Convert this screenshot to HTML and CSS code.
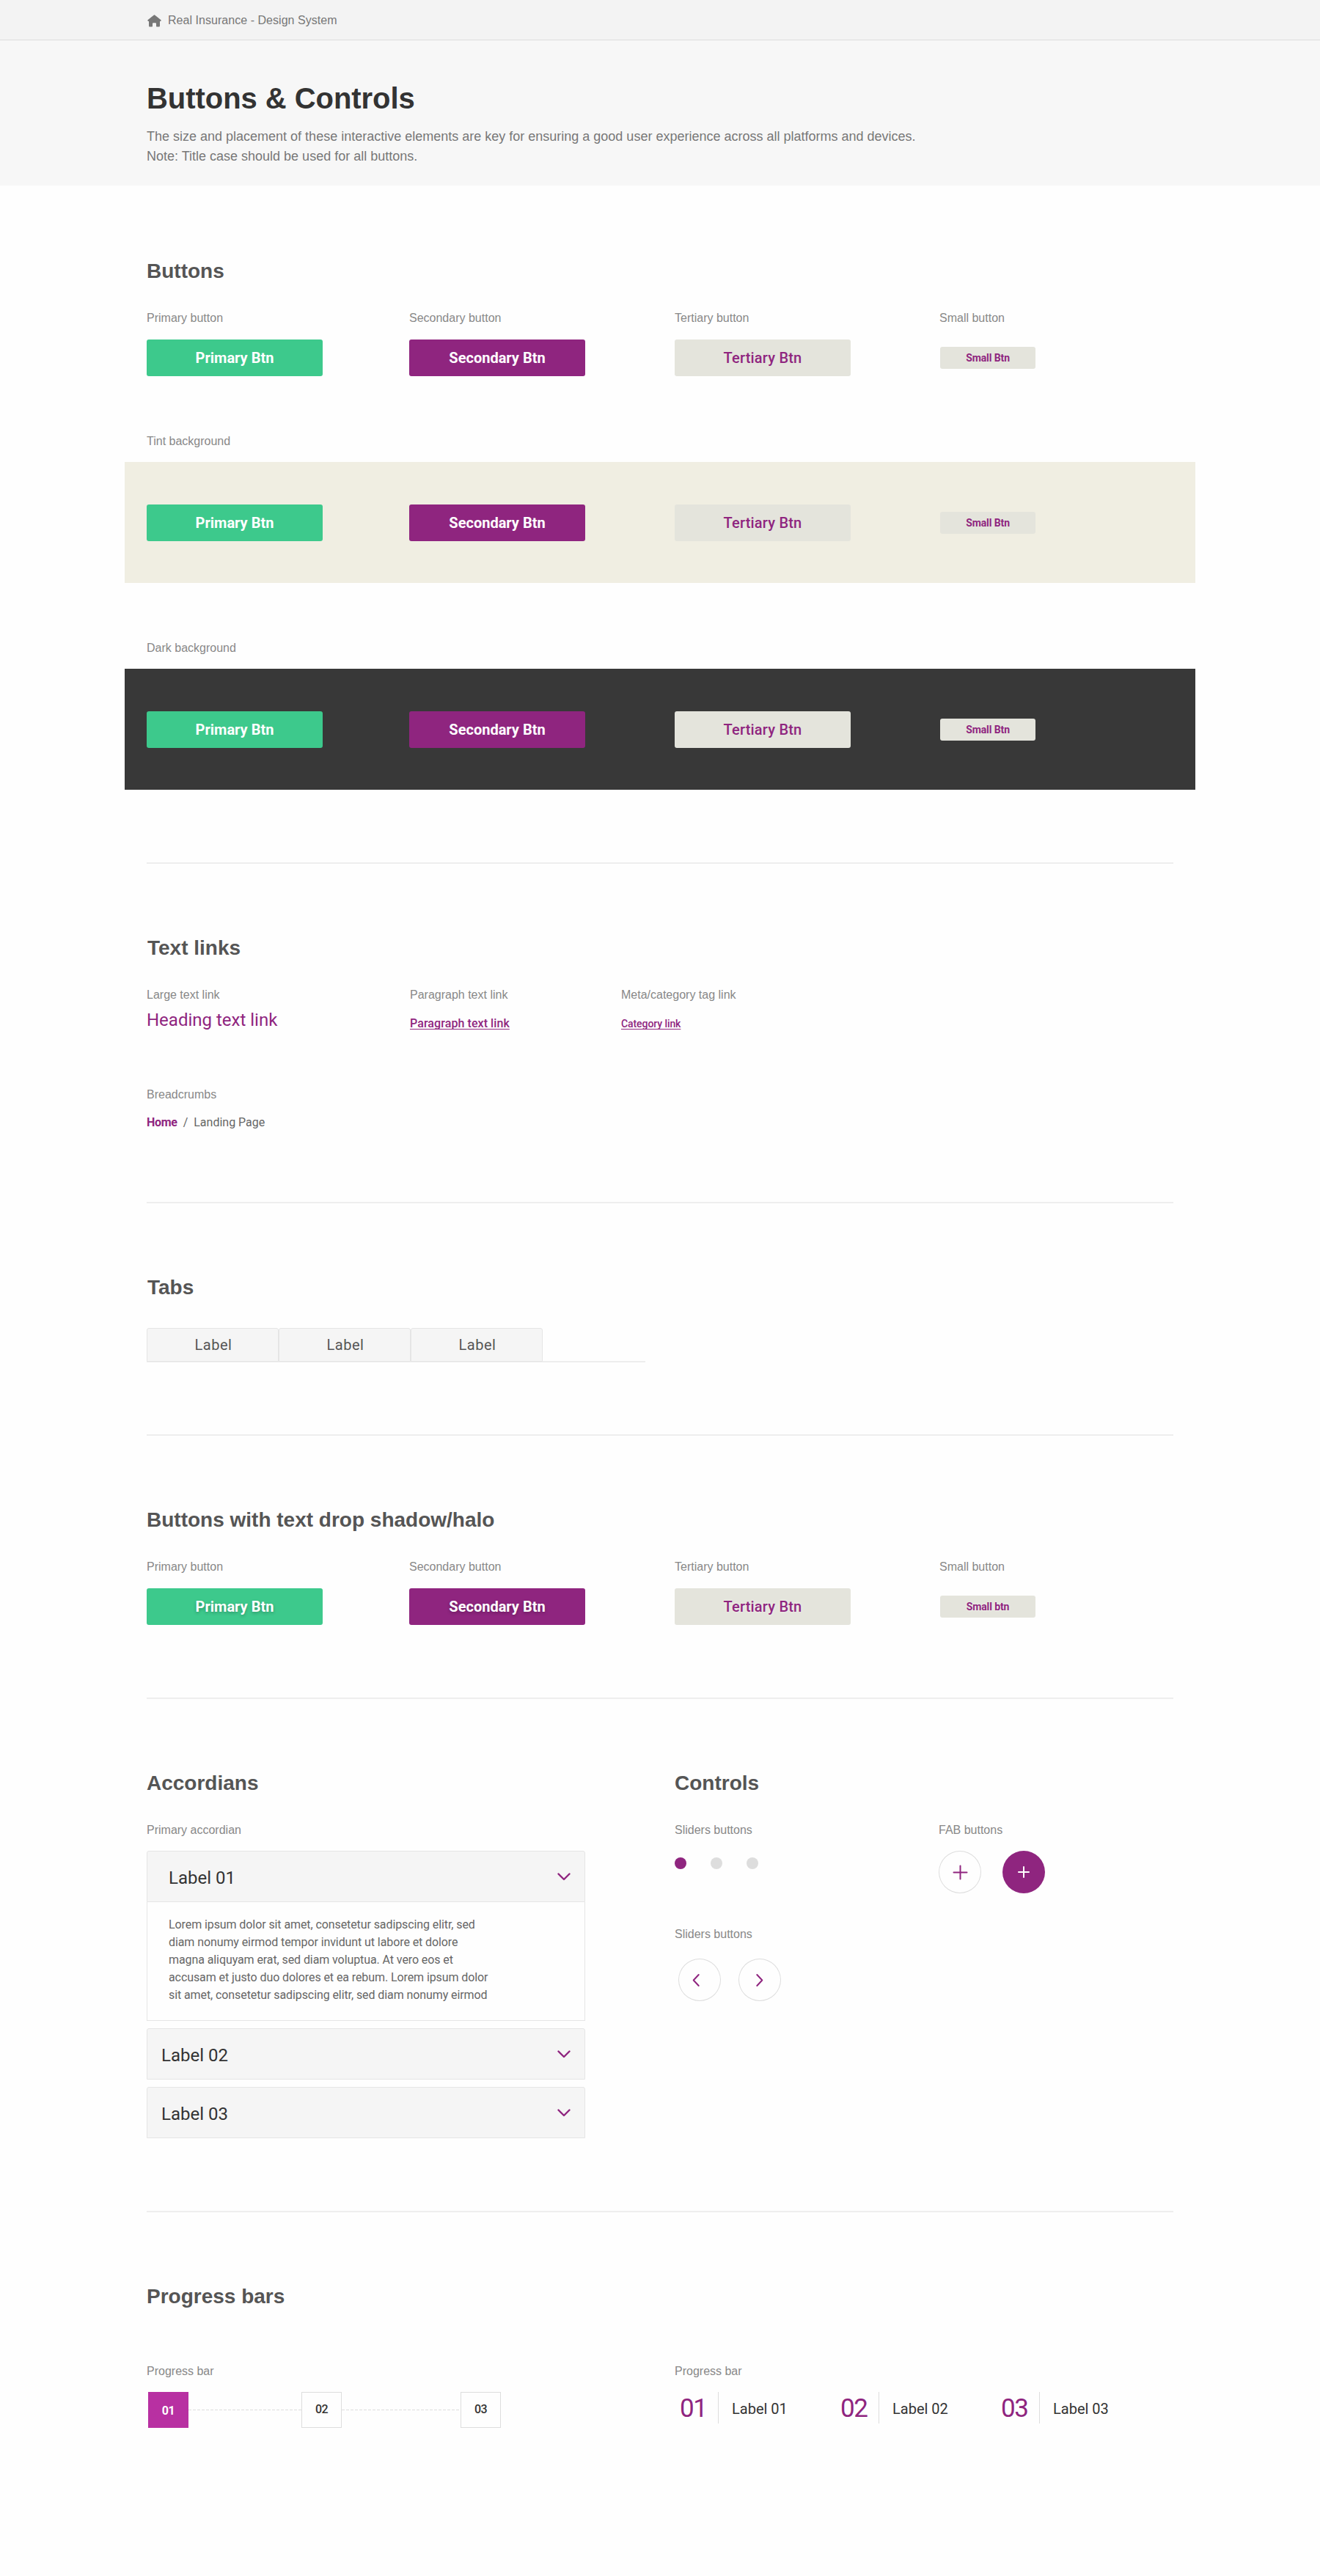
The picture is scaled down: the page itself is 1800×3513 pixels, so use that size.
FILE: index.html
```html
<!DOCTYPE html>
<html lang="en">
<head>
  <meta charset="UTF-8">
  <title>Real Insurance - Design System | Buttons &amp; Controls</title>
  <link rel="stylesheet" href="styles.css">
</head>
<body>

  <nav class="topbar">
    <div class="container topbar-inner">
      <svg class="home-icon" width="19" height="17" viewBox="0 0 19 17">
        <path d="M8.6.7a1.4 1.4 0 0 1 1.8 0l7.8 6.3c.9.8.5 1.9-.5 1.9H17v6.3c0 .8-.6 1.3-1.3 1.3h-2.9c-.5 0-.8-.3-.8-.8v-3.3c0-.8-.5-1.2-1.2-1.2H8.2c-.7 0-1.2.4-1.2 1.2v3.3c0 .5-.3.8-.8.8H3.3c-.7 0-1.3-.5-1.3-1.3V8.900h-.7c-1 0-1.400-1.100-.5-1.900z"/>
      </svg>
      <span>Real Insurance - Design System</span>
    </div>
  </nav>

  <header class="hero">
    <div class="container">
      <h1>Buttons &amp; Controls</h1>
      <p>The size and placement of these interactive elements are key for ensuring a good user experience across all platforms and devices.<br>Note: Title case should be used for all buttons.</p>
    </div>
  </header>

  <main class="container">

    <!-- Buttons -->
    <section class="block block-first">
      <h2>Buttons</h2>
      <div class="cols label-row">
        <p class="label">Primary button</p>
        <p class="label">Secondary button</p>
        <p class="label">Tertiary button</p>
        <p class="label">Small button</p>
      </div>
      <div class="cols btn-row">
        <button class="btn btn-primary">Primary Btn</button>
        <button class="btn btn-secondary">Secondary Btn</button>
        <button class="btn btn-tertiary">Tertiary Btn</button>
        <button class="btn btn-small">Small Btn</button>
      </div>

      <p class="label label-next">Tint background</p>
      <div class="band band-tint">
        <div class="cols btn-row">
          <button class="btn btn-primary">Primary Btn</button>
          <button class="btn btn-secondary">Secondary Btn</button>
          <button class="btn btn-tertiary">Tertiary Btn</button>
          <button class="btn btn-small">Small Btn</button>
        </div>
      </div>

      <p class="label label-next">Dark background</p>
      <div class="band band-dark">
        <div class="cols btn-row">
          <button class="btn btn-primary">Primary Btn</button>
          <button class="btn btn-secondary">Secondary Btn</button>
          <button class="btn btn-tertiary">Tertiary Btn</button>
          <button class="btn btn-small">Small Btn</button>
        </div>
      </div>
    </section>

    <!-- Text links -->
    <section class="block">
      <h2 class="h2-t">Text links</h2>
      <div class="link-cols">
        <div>
          <p class="label">Large text link</p>
          <a class="link-heading" href="#">Heading text link</a>
        </div>
        <div>
          <p class="label">Paragraph text link</p>
          <a class="link-paragraph" href="#">Paragraph text link</a>
        </div>
        <div>
          <p class="label">Meta/category tag link</p>
          <a class="link-category" href="#">Category link</a>
        </div>
      </div>
      <p class="label label-breadcrumbs">Breadcrumbs</p>
      <div class="breadcrumbs">
        <a href="#">Home</a>
        <span>/</span>
        <span>Landing Page</span>
      </div>
    </section>

    <!-- Tabs -->
    <section class="block block-tabs">
      <h2 class="h2-t">Tabs</h2>
      <div class="tabs">
        <div class="tab">Label</div>
        <div class="tab">Label</div>
        <div class="tab">Label</div>
      </div>
    </section>

    <!-- Buttons with text shadow -->
    <section class="block">
      <h2>Buttons with text drop shadow/halo</h2>
      <div class="cols label-row">
        <p class="label">Primary button</p>
        <p class="label">Secondary button</p>
        <p class="label">Tertiary button</p>
        <p class="label">Small button</p>
      </div>
      <div class="cols btn-row">
        <button class="btn btn-primary btn-shadow">Primary Btn</button>
        <button class="btn btn-secondary btn-shadow">Secondary Btn</button>
        <button class="btn btn-tertiary btn-halo">Tertiary Btn</button>
        <button class="btn btn-small btn-halo">Small btn</button>
      </div>
    </section>

    <!-- Accordians + Controls -->
    <section class="block halves">
      <div class="accordian-col">
        <h2>Accordians</h2>
        <p class="label">Primary accordian</p>
        <div class="accordian">
          <div class="accordian-item open">
            <div class="accordian-head">
              <span>Label 01</span>
              <svg class="chevron" width="18" height="11" viewBox="0 0 18 11"><path d="M1.5 1.5 9 9l7.5-7.5"/></svg>
            </div>
            <div class="accordian-body">
              Lorem ipsum dolor sit amet, consetetur sadipscing elitr, sed<br>
              diam nonumy eirmod tempor invidunt ut labore et dolore<br>
              magna aliquyam erat, sed diam voluptua. At vero eos et<br>
              accusam et justo duo dolores et ea rebum. Lorem ipsum dolor<br>
              sit amet, consetetur sadipscing elitr, sed diam nonumy eirmod
            </div>
          </div>
          <div class="accordian-item">
            <div class="accordian-head">
              <span>Label 02</span>
              <svg class="chevron" width="18" height="11" viewBox="0 0 18 11"><path d="M1.5 1.5 9 9l7.5-7.5"/></svg>
            </div>
          </div>
          <div class="accordian-item">
            <div class="accordian-head">
              <span>Label 03</span>
              <svg class="chevron" width="18" height="11" viewBox="0 0 18 11"><path d="M1.5 1.5 9 9l7.5-7.5"/></svg>
            </div>
          </div>
        </div>
      </div>

      <div>
        <h2>Controls</h2>
        <div class="control-cols">
          <div>
            <p class="label">Sliders buttons</p>
            <div class="dots">
              <span class="dot active"></span>
              <span class="dot"></span>
              <span class="dot"></span>
            </div>
            <p class="label label-next">Sliders buttons</p>
            <div class="arrows">
              <div class="circle"><svg width="58" height="58" viewBox="0 0 58 58"><path d="M27.7 22l-7 7.5 7 7.5"/></svg></div>
              <div class="circle"><svg width="58" height="58" viewBox="0 0 58 58"><path d="M25.3 22l7 7.5-7 7.5"/></svg></div>
            </div>
          </div>
          <div>
            <p class="label">FAB buttons</p>
            <div class="fabs">
              <div class="circle"><svg width="58" height="58" viewBox="0 0 58 58"><path d="M20.5 29.5h18M29.5 20.5v18"/></svg></div>
              <div class="circle filled"><svg width="58" height="58" viewBox="0 0 58 58"><path d="M22 29h14M29 22v14"/></svg></div>
            </div>
          </div>
        </div>
      </div>
    </section>

    <!-- Progress bars -->
    <section class="block block-last">
      <h2>Progress bars</h2>
      <div class="halves">
        <div>
          <p class="label">Progress bar</p>
          <div class="steps">
            <div class="step current">01</div>
            <div class="step-line"></div>
            <div class="step">02</div>
            <div class="step-line long"></div>
            <div class="step">03</div>
          </div>
        </div>
        <div>
          <p class="label">Progress bar</p>
          <div class="stages">
            <div class="stage"><span class="stage-num">01</span><span class="stage-label">Label 01</span></div>
            <div class="stage"><span class="stage-num">02</span><span class="stage-label">Label 02</span></div>
            <div class="stage"><span class="stage-num">03</span><span class="stage-label">Label 03</span></div>
          </div>
        </div>
      </div>
    </section>

  </main>

</body>
</html>
```
FILE: styles.css
```css
* {
  box-sizing: border-box;
}
body {
  margin: 0;
  background-color: #fefefe;
  font-family: "Liberation Sans", Arial, sans-serif;
  color: #555;
}
h1, h2, p {
  margin: 0;
}
.container {
  width: 1400px;
  margin: 0 auto;
}

/* Top bar */
.topbar {
  height: 55px;
  background-color: #f3f3f3;
  border-bottom: 1px solid #dcdcdc;
}
.topbar-inner {
  display: flex;
  align-items: flex-start;
  gap: 9px;
  padding: 18px 0 0 1px;
  font-size: 16px;
  line-height: 20px;
  letter-spacing: 0.04px;
  color: #777;
}
.home-icon {
  margin-top: 2px;
  fill: #777;
}

/* Hero */
.hero {
  height: 198px;
  padding-top: 55px;
  background-color: #f7f7f7;
}
.hero h1 {
  font-size: 40px;
  line-height: 48px;
  letter-spacing: -0.05px;
  color: #333;
}
.hero p {
  margin-top: 15px;
  font-size: 18px;
  line-height: 27px;
  color: #777;
}

/* Sections */
.block {
  padding: 98px 0 99px;
  border-bottom: 2px solid #eee;
}
.block-first {
  padding-top: 100px;
}
.block-tabs {
  padding-bottom: 98px;
}
.block-last {
  border-bottom: none;
}
h2 {
  margin-bottom: 37px;
  font-size: 28px;
  line-height: 33px;
  color: #555;
}
.h2-t {
  padding-left: 1px;
}
.label {
  font-size: 16px;
  line-height: 21px;
  color: #888;
}
.label-next {
  margin-top: 78px;
}
.cols {
  display: grid;
  grid-template-columns: 358px 362px 362px auto;
}
.halves {
  display: grid;
  grid-template-columns: 720px auto;
}

/* Buttons */
.label-row {
  grid-template-columns: 358px 362px 361px auto;
  margin-bottom: 19px;
}
.btn-row {
  height: 50px;
  align-items: center;
}
.btn {
  width: 240px;
  height: 50px;
  padding: 0;
  border: none;
  border-radius: 3px;
  font-family: Roboto, sans-serif;
  font-size: 20px;
  font-weight: 700;
  color: #fff;
  cursor: pointer;
}
.btn-primary {
  background-color: #3dc98c;
}
.btn-secondary {
  background-color: #8f257f;
}
.btn-tertiary {
  background-color: #e4e4dc;
  color: #8f257f;
  font-weight: 500;
  letter-spacing: 0.2px;
}
.btn-small {
  width: 130px;
  height: 30px;
  background-color: #e4e4dc;
  color: #8f257f;
  font-size: 14px;
  letter-spacing: -0.1px;
}
.btn-shadow {
  text-shadow: 0 2px 4px rgba(0, 0, 0, 0.25);
}
.btn-halo {
  text-shadow: 0 0 4px rgba(255, 255, 255, 0.6);
}
.band {
  margin: 18px -30px 0;
  padding: 58px 30px 57px;
}
.band-tint {
  background-color: #f0eee2;
}
.band-dark {
  background-color: #383838;
}

/* Text links */
.link-cols {
  display: grid;
  grid-template-columns: 359px 288px auto;
}
.link-cols a, .breadcrumbs {
  display: block;
  font-family: Roboto, sans-serif;
  color: #8f257f;
}
.link-cols .link-heading {
  margin-top: 10px;
  font-size: 24px;
  line-height: 28px;
  text-decoration: none;
}
.link-paragraph, .link-category {
  margin-top: 19px;
  font-size: 16px;
  line-height: 20px;
  font-weight: 500;
  letter-spacing: 0.08px;
  text-decoration: underline;
  text-decoration-thickness: 1px;
  text-underline-offset: 2px;
  text-decoration-skip-ink: none;
}
.link-category {
  font-size: 14px;
  letter-spacing: -0.08px;
}
.label-breadcrumbs {
  margin-top: 76px;
}
.breadcrumbs {
  display: flex;
  gap: 8px;
  margin-top: 19px;
  font-size: 16px;
  line-height: 18px;
}
.breadcrumbs a {
  color: #8f257f;
  font-weight: 700;
  letter-spacing: -0.3px;
  text-decoration: none;
}
.breadcrumbs span {
  color: #666;
}

/* Tabs */
.tabs {
  display: flex;
  width: 680px;
  height: 47px;
  margin-top: 39px;
  border-bottom: 2px solid #eee;
}
.block-tabs h2 {
  margin-bottom: 0;
}
.tab {
  width: 180px;
  height: 46px;
  padding-left: 2px;
  border: 1px solid #e5e5e5;
  border-radius: 3px 3px 0 0;
  background-color: #f5f5f5;
  font: 20px/44px Roboto, sans-serif;
  letter-spacing: 0.5px;
  text-align: center;
  color: #555;
}

/* Accordian */
.accordian {
  display: flex;
  flex-direction: column;
  gap: 10px;
  width: 598px;
  margin-top: 18px;
  font-family: Roboto, sans-serif;
}
.accordian-head {
  display: flex;
  align-items: center;
  justify-content: space-between;
  height: 70px;
  padding: 0 19px;
  border: 1px solid #e5e5e5;
  border-radius: 3px 3px 0 0;
  background-color: #f5f5f5;
  font-size: 24px;
  color: #333;
}
.accordian-head span {
  padding-top: 3px;
}
.open .accordian-head {
  padding-left: 29px;
}
.accordian-body {
  height: 162px;
  padding: 19px 29px 0;
  border: 1px solid #e5e5e5;
  border-top: none;
  font-size: 16px;
  line-height: 24px;
  letter-spacing: -0.09px;
  color: #666;
}
.chevron {
  fill: none;
  stroke: #8f257f;
  stroke-width: 2.4;
  stroke-linecap: round;
  stroke-linejoin: round;
}

/* Controls */
.control-cols {
  display: grid;
  grid-template-columns: 360px auto;
}
.dots {
  display: flex;
  gap: 33px;
  margin-top: 27px;
}
.dot {
  width: 16px;
  height: 16px;
  border-radius: 50%;
  background-color: #ddd;
}
.dot.active {
  background-color: #8f257f;
}
.arrows {
  display: flex;
  gap: 24px;
  margin: 23px 0 0 5px;
}
.fabs {
  display: flex;
  gap: 29px;
  margin-top: 18px;
}
.circle {
  width: 58px;
  height: 58px;
  border-radius: 50%;
  box-shadow: inset 0 0 0 1px #ddd;
}
.circle svg {
  display: block;
  fill: none;
  stroke: #8f257f;
  stroke-width: 2;
  stroke-linecap: round;
  stroke-linejoin: round;
}
.circle.filled {
  background-color: #8f257f;
  box-shadow: none;
}
.circle.filled svg {
  stroke: #fff;
}

/* Progress bars */
.block-last h2 {
  margin-bottom: 75px;
}
.steps {
  display: flex;
  align-items: center;
  margin: 18px 0 0 2px;
}
.step {
  width: 55px;
  height: 49px;
  border: 1px solid #ddd;
  font: 500 16px/45px Roboto, sans-serif;
  letter-spacing: -0.5px;
  text-align: center;
  color: #333;
}
.step.current {
  border-color: #b830a2;
  background-color: #b830a2;
  font-weight: 700;
  line-height: 49px;
  color: #fff;
}
.step-line {
  width: 154px;
  height: 1px;
  background: repeating-linear-gradient(to right, #ddd 0, #ddd 4px, transparent 4px, transparent 6px);
}
.step-line.long {
  width: 162px;
}
.stages {
  display: grid;
  grid-template-columns: 219px 219px auto;
  margin-top: 18px;
  font-family: Roboto, sans-serif;
}
.stage {
  display: flex;
  height: 43px;
}
.stage-num {
  width: 60px;
  padding-left: 7px;
  border-right: 1px solid #ddd;
  font-size: 35px;
  line-height: 46px;
  letter-spacing: -1.5px;
  color: #8f257f;
}
.stage-label {
  padding-left: 18px;
  font-size: 20px;
  line-height: 46px;
  color: #333;
}
```
